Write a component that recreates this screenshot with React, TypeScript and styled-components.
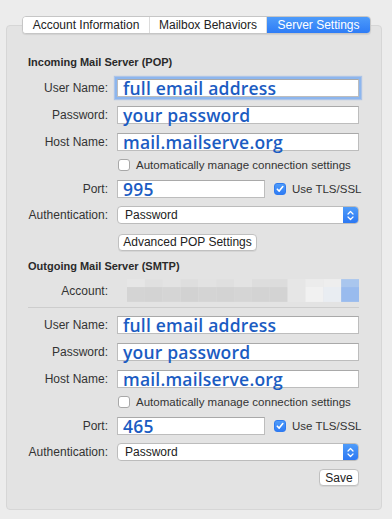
import styled, { createGlobalStyle } from "styled-components";

const GlobalStyle = createGlobalStyle`
  html, body {
    margin: 0;
    padding: 0;
    background: #ececec;
    font-family: "Liberation Sans", Arial, sans-serif;
    color: #2b2b2b;
  }
`;

const Layout = styled.div`
  width: 392px;
  height: 519px;
  display: flex;
  flex-direction: column;
  align-items: flex-start;
  padding: 16px 0 0 6px;
  box-sizing: border-box;
`;

const TabBar = styled.div`
  display: flex;
  height: 18px;
  margin: 0 0 -9px 16px;
  position: relative;
  z-index: 1;
  border: 1px solid #c6c6c6;
  border-radius: 4px;
  background: #fff;
  box-sizing: border-box;
  overflow: hidden;
  box-shadow: 0 1px 1px rgba(0, 0, 0, 0.08);
`;

const Tab = styled.div<{ $w: number; $active?: boolean }>`
  width: ${(p) => p.$w}px;
  display: flex;
  align-items: center;
  justify-content: center;
  font-size: 12px;
  white-space: nowrap;
  color: ${(p) => (p.$active ? "#fff" : "#222")};
  background: ${(p) => (p.$active ? "linear-gradient(#4d9bfa, #2e7cf6)" : "#fff")};
  & + & {
    border-left: 1px solid #dcdcdc;
  }
`;

const Panel = styled.div`
  width: 376px;
  height: 485px;
  box-sizing: border-box;
  background: #e3e3e3;
  border: 1px solid #d6d6d6;
  border-radius: 4px;
  padding: 29px 22px 0 21px;
  display: flex;
  flex-direction: column;
`;

const Heading = styled.div<{ $mt?: number }>`
  font-size: 11px;
  font-weight: bold;
  line-height: 14px;
  height: 14px;
  color: #2a2a2a;
  margin-top: ${(p) => p.$mt ?? 0}px;
`;

const Row = styled.div<{ $mt: number; $h?: number }>`
  display: flex;
  align-items: center;
  height: ${(p) => p.$h ?? 18}px;
  margin-top: ${(p) => p.$mt}px;
  white-space: nowrap;
`;

const Label = styled.div`
  width: 80px;
  flex: none;
  text-align: right;
  font-size: 12px;
  color: #333;
  margin-right: 9px;
`;

const Field = styled.div<{ $w?: number; $focus?: boolean }>`
  width: ${(p) => p.$w ?? 242}px;
  height: 18px;
  flex: none;
  box-sizing: border-box;
  background: #fff;
  border: 1px solid #bdbdbd;
  border-top-color: #a9a9a9;
  padding-left: 5px;
  display: flex;
  align-items: center;
  font-family: "Open Sans", Lato, sans-serif;
  font-weight: 600;
  font-size: 17.5px;
  line-height: 16px;
  letter-spacing: 0.2px;
  color: #1b5cc2;
  white-space: nowrap;
  box-shadow: ${(p) => (p.$focus ? "0 0 0 2px #8db6ee, 0 0 1px 3px rgba(120, 165, 235, 0.5)" : "none")};
`;

const CheckRow = styled.div`
  display: flex;
  align-items: center;
  font-size: 11.5px;
  color: #333;
  gap: 6px;
  white-space: nowrap;
`;

const Box = styled.span<{ $on?: boolean }>`
  width: 12px;
  height: 12px;
  flex: none;
  box-sizing: border-box;
  border-radius: 3px;
  border: 1px solid ${(p) => (p.$on ? "#2f7bf0" : "#a8a8a8")};
  background: ${(p) => (p.$on ? "linear-gradient(#4f9cf9, #2f7cf5)" : "#fff")};
  display: flex;
  align-items: center;
  justify-content: center;
`;

const Spacer = styled.div<{ $w: number }>`
  width: ${(p) => p.$w}px;
  flex: none;
`;

const Select = styled.div`
  width: 242px;
  height: 18px;
  box-sizing: border-box;
  background: #fff;
  border: 1px solid #bcbcbc;
  border-radius: 4px;
  display: flex;
  align-items: center;
  overflow: hidden;
  font-size: 12px;
  color: #222;
`;

const SelectText = styled.div`
  flex: 1;
  padding-left: 7px;
`;

const SelectArrow = styled.div`
  width: 15px;
  height: 100%;
  background: linear-gradient(#4f9cf9, #2c78f3);
  display: flex;
  align-items: center;
  justify-content: center;
`;

const Button = styled.div<{ $w: number }>`
  width: ${(p) => p.$w}px;
  height: 17px;
  box-sizing: border-box;
  background: #fff;
  border: 1px solid #c0c0c0;
  border-radius: 4px;
  display: flex;
  align-items: center;
  justify-content: center;
  font-size: 12px;
  color: #222;
  box-shadow: 0 1px 0 rgba(0, 0, 0, 0.06);
`;

const Divider = styled.div`
  height: 1px;
  background: #cdcdcd;
  margin-top: 5px;
  width: 331px;
`;

const RightRow = styled.div`
  display: flex;
  justify-content: flex-end;
  width: 331px;
  margin-top: 8px;
`;

const Check = () => (
  <svg width="8" height="8" viewBox="0 0 8 8">
    <path d="M1.3 4.2 L3.2 6.1 L6.8 1.6" stroke="#fff" strokeWidth="1.6" fill="none" strokeLinecap="round" strokeLinejoin="round" />
  </svg>
);

const Arrows = () => (
  <svg width="7" height="11" viewBox="0 0 7 11">
    <path d="M1 4 L3.5 1.5 L6 4 M1 7 L3.5 9.5 L6 7" stroke="#fff" strokeWidth="1.2" fill="none" strokeLinecap="round" strokeLinejoin="round" />
  </svg>
);

// blurred account name from the screenshot
const mosaic = [
  ["#e6e6e6", "#e0e0e0", "#e3e3e3", "#dedede", "#e2e2e2", "#dfdfdf", "#e3e3e3", "#dddddd", "#dcdcdc", "#e6e6e6", "#ececec", "#eeeeee", "#a9c6ee"],
  ["#d4d4d4", "#d3d3d3", "#d5d5d5", "#d2d2d2", "#d4d4d4", "#d3d3d3", "#d5d5d5", "#d3d3d3", "#d3d3d3", "#e6e6e6", "#f1f1f1", "#e9edf2", "#99bbee"],
];

const Blur = () => (
  <svg width="234" height="23" viewBox="0 0 234 23">
    {mosaic[0].map((c, i) => (
      <rect key={"a" + i} x={i * 18} y={0} width={18} height={8} fill={c} />
    ))}
    {mosaic[1].map((c, i) => (
      <rect key={"b" + i} x={i * 18} y={8} width={18} height={15} fill={c} />
    ))}
  </svg>
);

type ServerProps = { port: string; first?: boolean };

const ServerFields = ({ port, first }: ServerProps) => (
  <>
    <Row $mt={first ? 10 : 8}>
      <Label>User Name:</Label>
      <Field $focus={first}>full email address</Field>
    </Row>
    <Row $mt={9}>
      <Label>Password:</Label>
      <Field>your password</Field>
    </Row>
    <Row $mt={9}>
      <Label>Host Name:</Label>
      <Field>mail.mailserve.org</Field>
    </Row>
    <Row $mt={7} $h={14}>
      <Spacer $w={90} />
      <CheckRow>
        <Box />
        Automatically manage connection settings
      </CheckRow>
    </Row>
    <Row $mt={8}>
      <Label>Port:</Label>
      <Field $w={148}>{port}</Field>
      <Spacer $w={9} />
      <CheckRow>
        <Box $on>
          <Check />
        </Box>
        Use TLS/SSL
      </CheckRow>
    </Row>
    <Row $mt={8}>
      <Label>Authentication:</Label>
      <Select>
        <SelectText>Password</SelectText>
        <SelectArrow>
          <Arrows />
        </SelectArrow>
      </Select>
    </Row>
  </>
);

const App = () => {
  return (
    <Layout>
      <GlobalStyle />
      <TabBar>
        <Tab $w={126}>Account Information</Tab>
        <Tab $w={116}>Mailbox Behaviors</Tab>
        <Tab $w={103} $active>
          Server Settings
        </Tab>
      </TabBar>
      <Panel>
        <Heading>Incoming Mail Server (POP)</Heading>
        <ServerFields port="995" first />
        <Row $mt={9}>
          <Spacer $w={90} />
          <Button $w={139}>Advanced POP Settings</Button>
        </Row>
        <Heading $mt={8}>Outgoing Mail Server (SMTP)</Heading>
        <Row $mt={6} $h={23}>
          <Label>Account:</Label>
          <Spacer $w={10} />
          <Blur />
        </Row>
        <Divider />
        <ServerFields port="465" />
        <RightRow>
          <Button $w={40}>Save</Button>
        </RightRow>
      </Panel>
    </Layout>
  );
};

export default App;
